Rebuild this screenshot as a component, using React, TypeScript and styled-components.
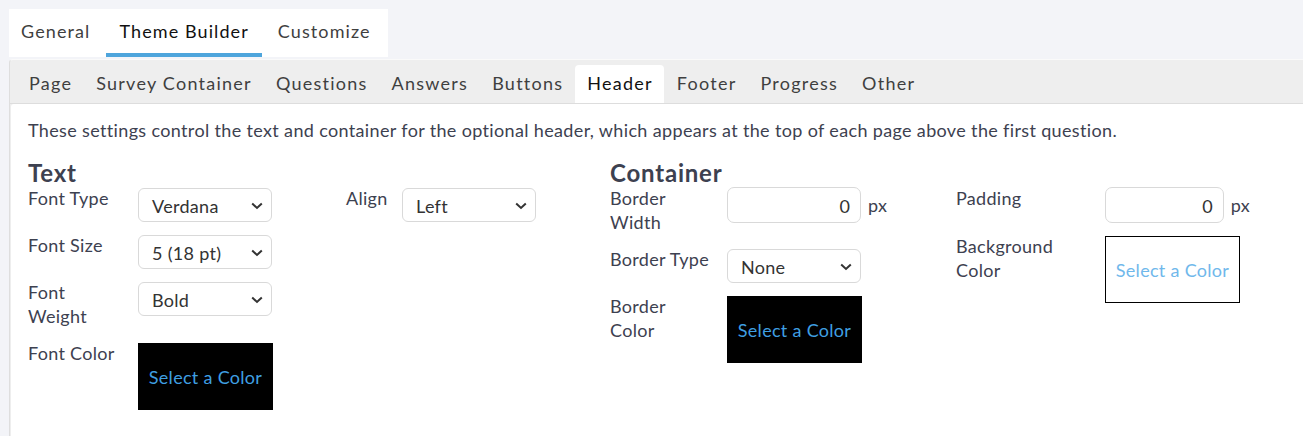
import styled, { createGlobalStyle } from "styled-components";

const GlobalStyle = createGlobalStyle`
  body {
    margin: 0;
    background: #f3f4f8;
    font-family: Lato, "Open Sans", sans-serif;
    color: #3d4150;
    overflow: hidden;
  }
`;

const Page = styled.div`
  padding: 9px 0 0 9px;
  min-height: 436px;
`;

const TopTabs = styled.div`
  display: inline-flex;
  background: #fff;
  height: 48px;
  padding-right: 4px;
  gap: 3px;
`;

const TopTab = styled.div<{ $active?: boolean }>`
  display: flex;
  align-items: center;
  padding: 0 13px;
  font-size: 18px;
  letter-spacing: 1.1px;
  color: ${(p) => (p.$active ? "#111" : "#3f3f3f")};
  border-bottom: 4px solid ${(p) => (p.$active ? "#4ea5dc" : "transparent")};
  &:first-child {
    padding-left: 12px;
  }
`;

const Tabset = styled.div`
  margin-top: 2px;
  width: 1310px;
  background: #eeeeee;
  border: 1px solid #dedede;
  border-top-color: #fafafa;
  border-radius: 4px 0 0 0;
`;

const SubTabs = styled.div`
  display: flex;
  align-items: flex-end;
  height: 43px;
  padding-left: 7px;
  border-bottom: 1px solid #dddddd;
`;

const SubTab = styled.div<{ $active?: boolean }>`
  display: flex;
  align-items: center;
  height: 36px;
  padding: 0 11px 2px 12px;
  margin-right: 1px;
  font-size: 18px;
  letter-spacing: 1.25px;
  color: ${(p) => (p.$active ? "#111" : "#3f3f3f")};
  background: ${(p) => (p.$active ? "#fff" : "transparent")};
  border-radius: 4px 4px 0 0;
`;

const Panel = styled.div`
  margin-left: 1px;
  background: #fff;
  border-radius: 3px 0 0 0;
  padding: 14px 17px 40px;
  min-height: 300px;
`;

const Intro = styled.p`
  margin: 0 0 18px;
  font-size: 18px;
  line-height: 24px;
  letter-spacing: 0.35px;
`;

const Sections = styled.div`
  display: flex;
`;

const Section = styled.div<{ $width: number }>`
  width: ${(p) => p.$width}px;
  flex-shrink: 0;
`;

const Heading = styled.h3`
  margin: 0;
  font-size: 24px;
  line-height: 26px;
  font-weight: 700;
  letter-spacing: 0.8px;
  color: #3d4150;
`;

const Columns = styled.div`
  display: flex;
`;

const Column = styled.div<{ $width: number }>`
  width: ${(p) => p.$width}px;
  display: flex;
  flex-direction: column;
  gap: 11px;
`;

const Row = styled.div`
  display: flex;
  align-items: flex-start;
`;

const Label = styled.div<{ $width: number }>`
  width: ${(p) => p.$width}px;
  flex-shrink: 0;
  font-size: 18px;
  line-height: 24px;
  letter-spacing: 0.3px;
  white-space: pre-line;
  padding-bottom: 2px;
`;

const SelectBox = styled.div`
  width: 134px;
  height: 34px;
  box-sizing: border-box;
  margin-top: 2px;
  border: 1px solid #d9d9d9;
  border-radius: 6px;
  display: flex;
  align-items: center;
  justify-content: space-between;
  padding: 2px 8px 0 13px;
  font-size: 18px;
  letter-spacing: 0.3px;
  color: #333;
`;

const NumberBox = styled.div`
  width: 134px;
  height: 36px;
  box-sizing: border-box;
  margin-top: 1px;
  border: 1px solid #d9d9d9;
  border-radius: 7px;
  display: flex;
  align-items: center;
  justify-content: flex-end;
  padding: 1px 10px 0;
  font-size: 18px;
  color: #333;
`;

const Unit = styled.span`
  font-size: 18px;
  letter-spacing: 0.3px;
  margin: 1px 0 0 7px;
  line-height: 36px;
`;

const Swatch = styled.div<{ $dark?: boolean }>`
  width: 135px;
  height: 67px;
  box-sizing: border-box;
  margin-top: 2px;
  background: ${(p) => (p.$dark ? "#000" : "#fff")};
  border: ${(p) => (p.$dark ? "none" : "1px solid #000")};
  display: flex;
  align-items: center;
  justify-content: center;
  font-size: 18px;
  letter-spacing: 0.3px;
  color: ${(p) => (p.$dark ? "#3f9fe2" : "#70b8eb")};
`;

const Chevron = () => (
  <svg width="12" height="8" viewBox="0 0 12 8">
    <path d="M1.2 1.5 L6 6 L10.8 1.5" fill="none" stroke="#333" strokeWidth="2" />
  </svg>
);

const Select = ({ value }: { value: string }) => (
  <SelectBox>
    <span>{value}</span>
    <Chevron />
  </SelectBox>
);

const subTabs = ["Page", "Survey Container", "Questions", "Answers", "Buttons", "Header", "Footer", "Progress", "Other"];

export default function App() {
  return (
    <>
      <GlobalStyle />
      <Page>
        <TopTabs>
          <TopTab>General</TopTab>
          <TopTab $active>Theme Builder</TopTab>
          <TopTab>Customize</TopTab>
        </TopTabs>
        <Tabset>
          <SubTabs>
            {subTabs.map((t) => (
              <SubTab key={t} $active={t === "Header"}>
                {t}
              </SubTab>
            ))}
          </SubTabs>
          <Panel>
            <Intro>
              These settings control the text and container for the optional header, which appears at the top of each page above the first question.
            </Intro>
            <Sections>
              <Section $width={582}>
                <Heading>Text</Heading>
                <Columns>
                  <Column $width={318}>
                    <Row>
                      <Label $width={110}>Font Type</Label>
                      <Select value="Verdana" />
                    </Row>
                    <Row>
                      <Label $width={110}>Font Size</Label>
                      <Select value="5 (18 pt)" />
                    </Row>
                    <Row>
                      <Label $width={110}>{"Font\nWeight"}</Label>
                      <Select value="Bold" />
                    </Row>
                    <Row>
                      <Label $width={110}>Font Color</Label>
                      <Swatch $dark>Select a Color</Swatch>
                    </Row>
                  </Column>
                  <Column $width={264}>
                    <Row>
                      <Label $width={56}>Align</Label>
                      <Select value="Left" />
                    </Row>
                  </Column>
                </Columns>
              </Section>
              <Section $width={640}>
                <Heading>Container</Heading>
                <Columns>
                  <Column $width={346}>
                    <Row>
                      <Label $width={117}>{"Border\nWidth"}</Label>
                      <NumberBox>0</NumberBox>
                      <Unit>px</Unit>
                    </Row>
                    <Row>
                      <Label $width={117}>Border Type</Label>
                      <Select value="None" />
                    </Row>
                    <Row>
                      <Label $width={117}>{"Border\nColor"}</Label>
                      <Swatch $dark>Select a Color</Swatch>
                    </Row>
                  </Column>
                  <Column $width={294}>
                    <Row>
                      <Label $width={149}>Padding</Label>
                      <NumberBox>0</NumberBox>
                      <Unit>px</Unit>
                    </Row>
                    <Row>
                      <Label $width={149}>{"Background\nColor"}</Label>
                      <Swatch>Select a Color</Swatch>
                    </Row>
                  </Column>
                </Columns>
              </Section>
            </Sections>
          </Panel>
        </Tabset>
      </Page>
    </>
  );
}
